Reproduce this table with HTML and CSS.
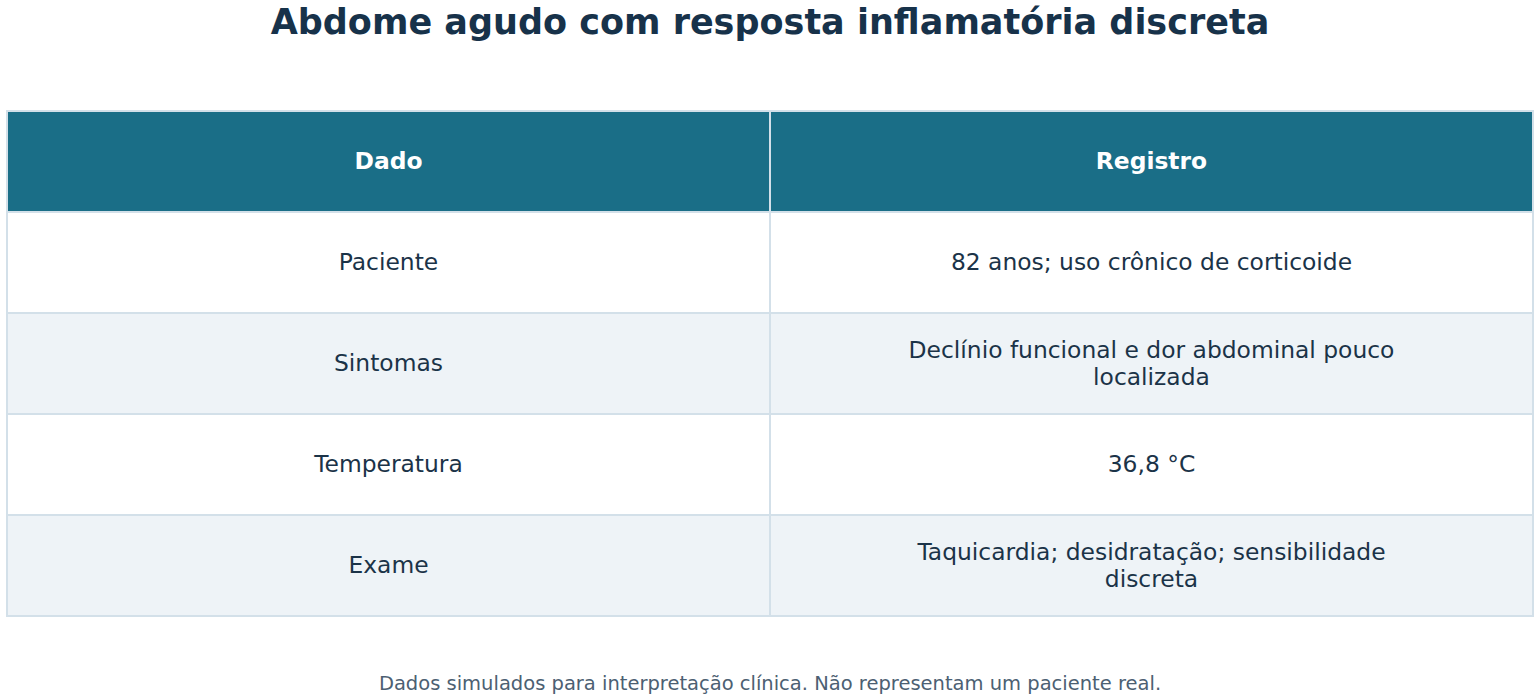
FILE: index.html
```html
<!DOCTYPE html>
<html lang="pt">
<head>
<meta charset="utf-8">
<link rel="stylesheet" href="styles.css">
</head>
<body>
<div class="page">
  <h1 class="title">Abdome agudo com resposta inflamatória discreta</h1>
  <table class="data">
    <thead>
      <tr><th>Dado</th><th>Registro</th></tr>
    </thead>
    <tbody>
      <tr><td>Paciente</td><td>82 anos; uso crônico de corticoide</td></tr>
      <tr class="alt"><td>Sintomas</td><td><span class="wrap">Declínio funcional e dor abdominal pouco localizada</span></td></tr>
      <tr><td>Temperatura</td><td>36,8 °C</td></tr>
      <tr class="alt"><td>Exame</td><td><span class="wrap">Taquicardia; desidratação; sensibilidade discreta</span></td></tr>
    </tbody>
  </table>
  <p class="note">Dados simulados para interpretação clínica. Não representam um paciente real.</p>
</div>
</body>
</html>
```

FILE: styles.css
```css
html, body {
  margin: 0;
  padding: 0;
  background: #ffffff;
}
.page {
  font-family: "DejaVu Sans", sans-serif;
  padding: 0 6px;
  display: flex;
  flex-direction: column;
  align-items: stretch;
}
.title {
  margin: 0;
  font-size: 35px;
  line-height: 44px;
  font-weight: bold;
  color: #17324a;
  text-align: center;
  height: 110px;
}
.data {
  width: 100%;
  border-collapse: collapse;
  table-layout: fixed;
  border: 2px solid #d3e0e9;
}
.data th, .data td {
  width: 50%;
  height: 101px;
  padding: 0 12px;
  text-align: center;
  vertical-align: middle;
  font-size: 23.4px;
  line-height: 27px;
  border: 2px solid #d3e0e9;
  box-sizing: border-box;
}
.data th {
  background: #1a6e87;
  color: #ffffff;
  font-weight: bold;
}
.data td {
  color: #1b3348;
  background: #ffffff;
}
.data tr.alt td {
  background: #eef3f7;
}
.wrap {
  display: inline-block;
  max-width: 500px;
}
.note {
  margin: 55px 0 0;
  text-align: center;
  font-size: 19.5px;
  color: #4c6072;
}
```
